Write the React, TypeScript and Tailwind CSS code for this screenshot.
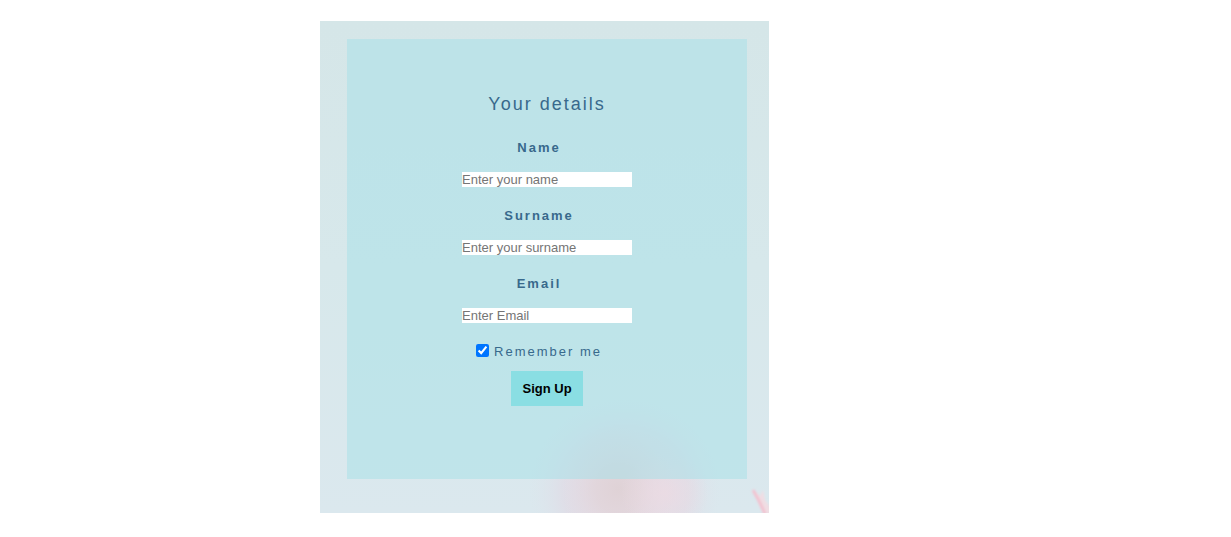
const fields = [
  { id: 'name', label: 'Name', placeholder: 'Enter your name', type: 'text' },
  { id: 'surname', label: 'Surname', placeholder: 'Enter your surname', type: 'text' },
  { id: 'email', label: 'Email', placeholder: 'Enter Email', type: 'email' },
];

function Backdrop() {
  return (
    <svg
      className="absolute inset-0 h-full w-full"
      viewBox="0 0 449 492"
      preserveAspectRatio="none"
      aria-hidden="true"
    >
      <defs>
        <linearGradient id="sky" x1="0" y1="0" x2="0" y2="1">
          <stop offset="0" stopColor="#d5e6e8" />
          <stop offset="0.5" stopColor="#d7e8eb" />
          <stop offset="1" stopColor="#dbe8ee" />
        </linearGradient>
        <radialGradient id="lilac">
          <stop offset="0" stopColor="#e6dbe5" />
          <stop offset="0.65" stopColor="#e0dce6" stopOpacity="0.8" />
          <stop offset="1" stopColor="#dde4ec" stopOpacity="0" />
        </radialGradient>
        <radialGradient id="rose">
          <stop offset="0" stopColor="#dfd2d6" />
          <stop offset="0.4" stopColor="#e1d4d9" stopOpacity="0.8" />
          <stop offset="1" stopColor="#e6d8e0" stopOpacity="0" />
        </radialGradient>
        <radialGradient id="blush">
          <stop offset="0" stopColor="#ecdbe3" stopOpacity="0.8" />
          <stop offset="1" stopColor="#ecdbe3" stopOpacity="0" />
        </radialGradient>
        <filter id="soft" x="-50%" y="-50%" width="200%" height="200%">
          <feGaussianBlur stdDeviation="1" />
        </filter>
      </defs>
      <rect width="449" height="492" fill="url(#sky)" />
      <ellipse cx="305" cy="470" rx="96" ry="92" fill="url(#lilac)" />
      <ellipse cx="298" cy="468" rx="56" ry="62" fill="url(#rose)" />
      <ellipse cx="345" cy="472" rx="44" ry="40" fill="url(#blush)" />
      <g filter="url(#soft)">
        <path d="M433 468 L440 475 L443 469 L445 479 L450 486 L450 493 L443 493 Z" fill="#f0dde3" />
        <path d="M433 469 Q439 479 445 493" stroke="#f2c3d0" strokeWidth="3" fill="none" />
      </g>
    </svg>
  );
}

export default function App() {
  return (
    <main className="bg-white px-[26%] py-[21px] font-['Liberation_Sans',Arial,sans-serif] text-[13px] leading-5 text-[#38698c]">
      <div className="relative isolate w-max overflow-hidden pt-[18px] pr-[22px] pb-[34px] pl-[27px]">
        <Backdrop />
        <form
          className="relative flex w-[400px] flex-col items-center bg-[#a9e0e7]/55 pt-[51px] pb-[73px]"
          onSubmit={(event) => event.preventDefault()}
        >
          <h1 className="mb-5 text-lg leading-7 tracking-[2px]">Your details</h1>
          {fields.map((field) => (
            <div key={field.id} className="mb-[19px] flex flex-col items-center">
              <label htmlFor={field.id} className="mb-3.5 pr-4 font-bold tracking-[2px]">
                {field.label}
              </label>
              <input
                id={field.id}
                type={field.type}
                placeholder={field.placeholder}
                className="block h-[15px] w-[170px] bg-white p-0 leading-[15px] text-black outline-none placeholder:text-[#757575]"
              />
            </div>
          ))}
          <div className="mb-[9px] flex items-center gap-[5px] pr-4 tracking-[2px]">
            <input id="remember" type="checkbox" defaultChecked className="mb-1 h-[13px] w-[13px]" />
            <label htmlFor="remember">Remember me</label>
          </div>
          <button type="submit" className="h-[35px] bg-[#8adee3] px-[11px] font-bold text-black">
            Sign Up
          </button>
        </form>
      </div>
    </main>
  );
}
